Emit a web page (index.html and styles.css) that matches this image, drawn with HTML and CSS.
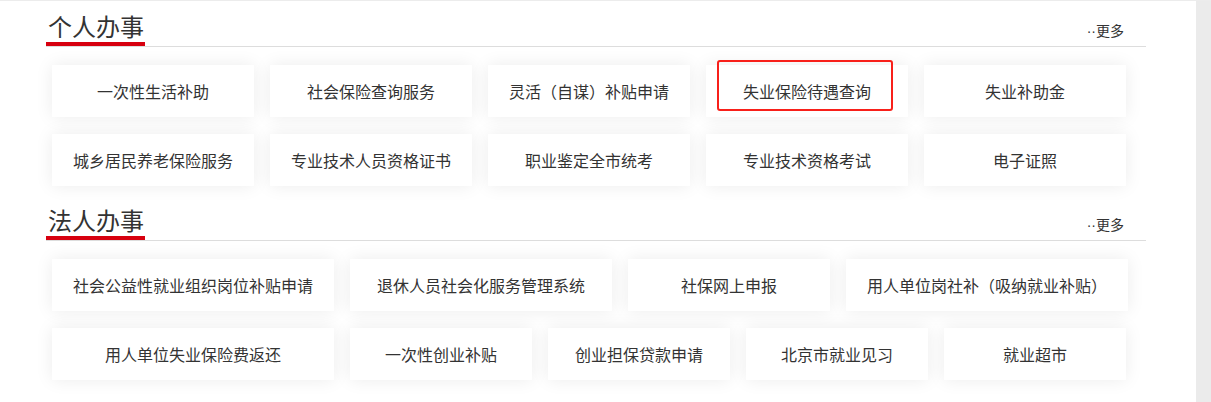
FILE: index.html
```html
<!DOCTYPE html>
<html lang="zh-CN">
<head>
    <meta charset="UTF-8">
    <meta name="viewport" content="width=device-width, initial-scale=1.0">
    <title>办事服务</title>
    <link rel="stylesheet" href="styles.css">
</head>
<body>
    <div class="page">
        <div class="main">
            <div class="section">
                <div class="section-head">
                    <h2 class="section-title">个人办事</h2>
                    <a class="more" href="#">··更多</a>
                </div>
                <div class="cards">
                    <a class="card" href="#">一次性生活补助</a>
                    <a class="card" href="#">社会保险查询服务</a>
                    <a class="card" href="#">灵活（自谋）补贴申请</a>
                    <a class="card card-marked" href="#">失业保险待遇查询<span class="mark"></span></a>
                    <a class="card" href="#">失业补助金</a>
                    <a class="card" href="#">城乡居民养老保险服务</a>
                    <a class="card" href="#">专业技术人员资格证书</a>
                    <a class="card" href="#">职业鉴定全市统考</a>
                    <a class="card" href="#">专业技术资格考试</a>
                    <a class="card" href="#">电子证照</a>
                </div>
            </div>
            <div class="section">
                <div class="section-head">
                    <h2 class="section-title">法人办事</h2>
                    <a class="more" href="#">··更多</a>
                </div>
                <div class="cards">
                    <a class="card card-wide" href="#">社会公益性就业组织岗位补贴申请</a>
                    <a class="card card-mid" href="#">退休人员社会化服务管理系统</a>
                    <a class="card" href="#">社保网上申报</a>
                    <a class="card card-wide" href="#">用人单位岗社补（吸纳就业补贴）</a>
                    <a class="card card-wide" href="#">用人单位失业保险费返还</a>
                    <a class="card card-small" href="#">一次性创业补贴</a>
                    <a class="card card-small" href="#">创业担保贷款申请</a>
                    <a class="card card-small" href="#">北京市就业见习</a>
                    <a class="card card-small" href="#">就业超市</a>
                </div>
            </div>
        </div>
        <div class="side"></div>
    </div>
</body>
</html>
```

FILE: styles.css
```css
body {
    font-family: "Noto Sans CJK SC", "Microsoft YaHei", sans-serif;
    margin: 0;
    padding: 0;
    background: #fff;
    color: #333;
}
.page {
    display: flex;
    min-height: 402px;
    border-top: 1px solid #ececec;
    box-sizing: border-box;
}
.main {
    width: 1196px;
    padding-left: 46px;
    box-sizing: border-box;
}
.side {
    flex: 1;
    background: #ebebeb;
}
.section {
    width: 1100px;
    padding-top: 9px;
    margin-bottom: 9px;
}
.section-head {
    display: flex;
    justify-content: space-between;
    align-items: flex-end;
    border-bottom: 1px solid #ddd;
}
.section-title {
    margin: 0;
    padding: 0 1px 0 2px;
    font-size: 24px;
    font-weight: normal;
    line-height: 32px;
    color: #333;
    border-bottom: 4px solid #d7000f;
}
.more {
    font-family: "Liberation Sans", "Noto Sans CJK SC", sans-serif;
    font-size: 14px;
    line-height: 20px;
    margin: 0 22px 5px 0;
    color: #333;
    text-decoration: none;
}
.cards {
    display: flex;
    flex-wrap: wrap;
    gap: 17px 16px;
    margin-top: 18px;
    padding-left: 6px;
}
.card {
    position: relative;
    width: 202px;
    height: 52px;
    display: flex;
    align-items: center;
    justify-content: center;
    background: #fff;
    box-shadow: 0 0 18px rgba(0, 0, 0, 0.08);
    font-size: 16px;
    color: #333;
    text-decoration: none;
}
.card-wide {
    width: 282px;
}
.card-mid {
    width: 262px;
}
.card-small {
    width: 182px;
}
.mark {
    position: absolute;
    left: 11px;
    top: -5px;
    width: 176px;
    height: 51px;
    border: 2px solid #f8201a;
    border-radius: 3px;
    box-sizing: border-box;
}
```
